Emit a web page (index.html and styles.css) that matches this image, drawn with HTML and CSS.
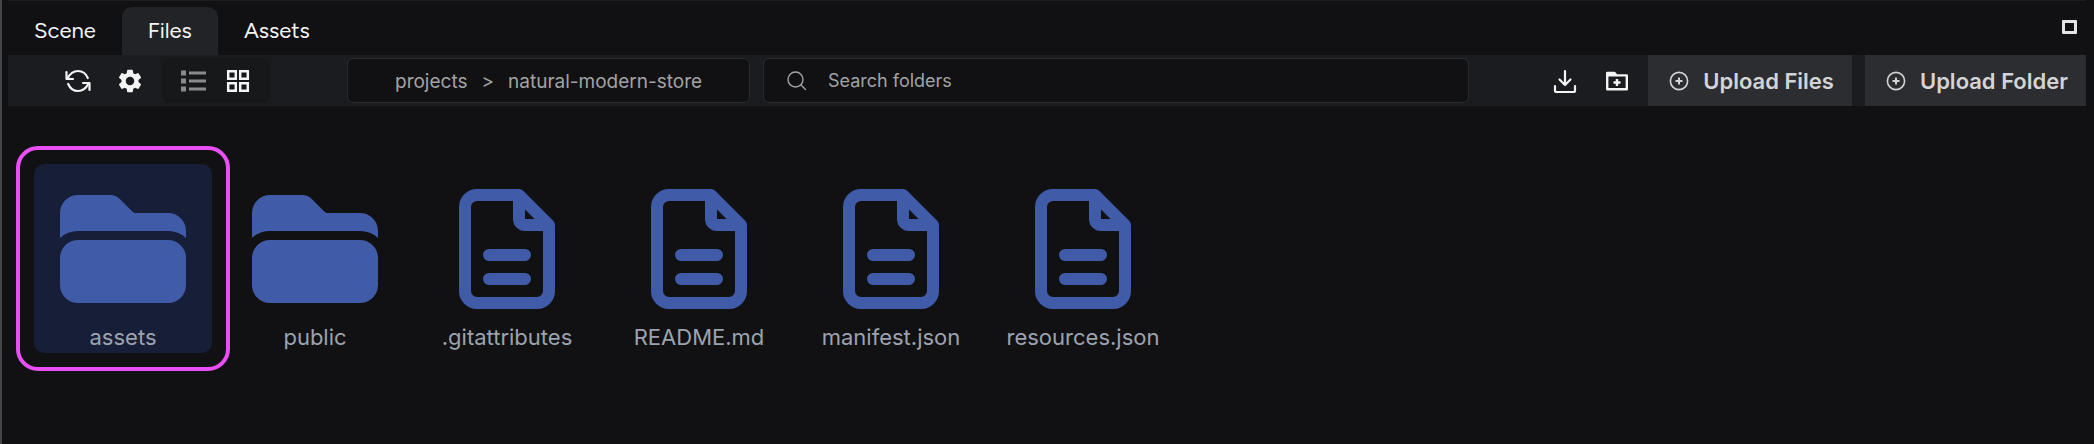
FILE: index.html
```html
<!DOCTYPE html>
<html lang="en">
<head>
<meta charset="utf-8">
<title>Files</title>
<link rel="stylesheet" href="styles.css">
</head>
<body>
<svg class="defs" aria-hidden="true">
  <symbol id="folder" viewBox="0 0 24 24"><path fill="currentColor" d="M19.5 21a3 3 0 0 0 3-3v-4.500a3 3 0 0 0-3-3h-15a3 3 0 0 0-3 3V18a3 3 0 0 0 3 3h15ZM1.500 10.146V6a3 3 0 0 1 3-3h5.379a2.250 2.250 0 0 1 1.590.659l2.122 2.121c.14.141.331.22.53.22H19.500a3 3 0 0 1 3 3v1.146A4.483 4.483 0 0 0 19.500 9h-15a4.483 4.483 0 0 0-3 1.146Z"/></symbol>
  <symbol id="file" viewBox="0 0 24 24"><path fill="none" stroke="currentColor" stroke-width="2" stroke-linecap="round" stroke-linejoin="round" d="M14 3H7a2 2 0 0 0-2 2v14a2 2 0 0 0 2 2h10a2 2 0 0 0 2-2V8L14 3v4a1 1 0 0 0 1 1h4M9 13h6M9 17h6"/></symbol>
  <symbol id="circle-plus" viewBox="0 0 20 20"><g fill="none" stroke="currentColor" stroke-width="1.600"><circle cx="10" cy="10" r="8.600"/><path stroke-width="2" d="M10 6.500v7M6.500 10h7"/></g></symbol>
</svg>
<main class="panel">
  <header class="tabs">
    <nav class="tab-list" role="tablist">
      <button class="tab" role="tab">Scene</button>
      <button class="tab tab-active" role="tab" aria-selected="true">Files</button>
      <button class="tab" role="tab">Assets</button>
    </nav>
    <button class="maximize" aria-label="Maximize"></button>
  </header>
  <div class="toolbar">
    <div class="tools">
      <button class="tool" aria-label="Refresh"><svg viewBox="0 0 26 26"><g fill="none" stroke="currentColor" stroke-width="2.200" stroke-linecap="round" stroke-linejoin="round"><path d="M1.500 4v7H8M24.500 22v-7H18"/><path d="M2.500 10.500C5 5.500 9 3 13 3c4.500 0 8 2.700 9.800 7M23.500 15.500C21 20.500 17 23 13 23c-4.500 0-8-2.700-9.800-7"/></g></svg></button>
      <button class="tool" aria-label="Settings"><svg viewBox="1 1 22 22"><path fill="currentColor" d="M19.140 12.940c.04-.3.060-.61.060-.94 0-.32-.02-.64-.07-.94l2.030-1.580a.49.490 0 0 0 .12-.61l-1.920-3.320a.488.488 0 0 0-.59-.22l-2.390.96c-.5-.38-1.030-.7-1.620-.94l-.36-2.540a.484.484 0 0 0-.48-.41h-3.840c-.24 0-.43.170-.47.410l-.36 2.540c-.59.240-1.130.570-1.620.940l-2.390-.96c-.22-.08-.47 0-.59.220L2.740 8.870c-.12.210-.08.470.12.610l2.030 1.580c-.05.300-.09.630-.09.940s.02.640.07.940l-2.030 1.580a.49.490 0 0 0-.12.610l1.920 3.320c.12.220.370.290.59.220l2.390-.96c.5.380 1.030.700 1.620.940l.36 2.540c.05.240.240.410.48.410h3.840c.24 0 .44-.17.470-.41l.36-2.540c.59-.24 1.130-.56 1.620-.94l2.390.96c.22.080.470 0 .59-.22l1.920-3.320c.12-.22.070-.47-.12-.61l-2.010-1.580zM12 15.600c-1.980 0-3.600-1.620-3.600-3.600s1.620-3.600 3.600-3.600 3.600 1.620 3.600 3.600-1.620 3.600-3.600 3.600z"/></svg></button>
    </div>
    <div class="views">
      <button class="tool tool-dim" aria-label="List view"><svg viewBox="0 0 26 26"><path fill="currentColor" d="M1 2.500h5v5H1zM9 3.500h17v3H9zM1 10.500h5v5H1zM9 11.500h17v3H9zM1 18.500h5v5H1zM9 19.500h17v3H9z"/></svg></button>
      <button class="tool" aria-label="Grid view"><svg viewBox="0 0 26 26"><path fill="none" stroke="currentColor" stroke-width="2.500" d="M3.200 3.200h7.600v7.600H3.200zM15.200 3.200h7.600v7.600h-7.600zM3.200 15.200h7.600v7.600H3.200zM15.200 15.200h7.600v7.600h-7.600z"/></svg></button>
    </div>
    <nav class="crumbs" aria-label="Path"><a href="#">projects</a><span>&gt;</span><a href="#">natural-modern-store</a></nav>
    <label class="search">
      <svg viewBox="0 0 20 20" aria-hidden="true"><g fill="none" stroke="currentColor" stroke-width="1.400" stroke-linecap="round"><circle cx="8.500" cy="8.500" r="7.500"/><path d="M14 14l4.500 4.500"/></g></svg>
      <input type="text" placeholder="Search folders" aria-label="Search folders">
    </label>
    <div class="actions">
      <button class="tool" aria-label="Download"><svg viewBox="0 0 26 26"><path fill="none" stroke="currentColor" stroke-width="2.200" stroke-linecap="round" stroke-linejoin="round" d="M13 3v14M7.500 11.500 13 17l5.500-5.500M3 18v4.500a1.500 1.500 0 0 0 1.500 1.500h17a1.500 1.500 0 0 0 1.500-1.500V18"/></svg></button>
      <button class="tool" aria-label="New folder"><svg viewBox="0 0 26 26"><g fill="none" stroke="currentColor" stroke-width="2.400" stroke-linejoin="round"><path d="M3.200 21.300V5h7.300l2 2.400h10.300v13.900zM3.200 7.400h9.300"/><path d="M13 11v7M9.500 14.500h7"/></g></svg></button>
    </div>
    <div class="uploads">
      <button class="upload"><svg aria-hidden="true"><use href="#circle-plus"/></svg>Upload Files</button>
      <button class="upload"><svg aria-hidden="true"><use href="#circle-plus"/></svg>Upload Folder</button>
    </div>
  </div>
  <section class="grid" aria-label="Files">
    <button class="item item-selected"><svg aria-hidden="true"><use href="#folder"/></svg><span>assets</span></button>
    <button class="item"><svg aria-hidden="true"><use href="#folder"/></svg><span>public</span></button>
    <button class="item"><svg aria-hidden="true"><use href="#file"/></svg><span>.gitattributes</span></button>
    <button class="item"><svg aria-hidden="true"><use href="#file"/></svg><span>README.md</span></button>
    <button class="item"><svg aria-hidden="true"><use href="#file"/></svg><span>manifest.json</span></button>
    <button class="item"><svg aria-hidden="true"><use href="#file"/></svg><span>resources.json</span></button>
  </section>
</main>
</body>
</html>
```
FILE: styles.css
```css
* { box-sizing: border-box; }
body {
  margin: 0;
  background: #111113;
  color: #f4f4f5;
  font: 22px/28px Inter, "Liberation Sans", sans-serif;
}
button {
  margin: 0;
  padding: 0;
  border: 0;
  background: none;
  color: inherit;
  font: inherit;
}
svg { display: block; flex: none; }
.defs { position: absolute; width: 0; height: 0; }
.panel {
  min-height: 100vh;
  padding: 0 8px 0 6px;
  border-left: 2px solid #444446;
}
.tabs {
  display: flex;
  align-items: flex-end;
  justify-content: space-between;
  height: 55px;
  border-top: 1px solid #1d1e21;
}
.tab-list { display: flex; }
.tab {
  height: 48px;
  padding: 0 26px;
  border-radius: 10px 10px 0 0;
  font-family: Figtree, Inter, sans-serif;
}
.tab-active { background: #222326; }
.maximize {
  width: 15px;
  height: 14px;
  margin: 0 9px 21px 0;
  border: 3px solid #e4e4e5;
  border-radius: 1px;
}
.toolbar {
  display: flex;
  align-items: center;
  height: 51px;
  background: #1b1c1f;
}
.tools { display: flex; gap: 26px; padding: 0 19px 0 57px; }
.tool svg { width: 26px; height: 26px; }
.tool-dim { color: #8b8b8d; }
.views {
  display: flex;
  gap: 19px;
  align-items: center;
  width: 108px;
  height: 45px;
  padding: 0 18px;
  border-radius: 8px;
  background: #17181a;
}
.crumbs, .search {
  display: flex;
  align-items: center;
  height: 45px;
  border: 1px solid #2b2c2f;
  border-radius: 6px;
  background: #111113;
  color: #a3a3a5;
}
.crumbs {
  gap: 14px;
  width: 403px;
  margin-left: 77px;
  padding: 2px 0 0 47px;
  font-size: 19px;
}
.crumbs a { color: inherit; text-decoration: none; }
.search {
  flex: 1;
  gap: 21px;
  margin-left: 13px;
  padding-left: 23px;
  font-size: 18px;
}
.search svg { width: 20px; height: 20px; }
.search input {
  flex: 1;
  min-width: 0;
  padding: 0;
  border: 0;
  outline: 0;
  background: none;
  color: inherit;
  font: inherit;
}
.search input::placeholder { color: inherit; opacity: 1; }
.actions { display: flex; gap: 26px; padding: 0 18px 0 83px; }
.uploads { display: flex; gap: 13px; align-self: stretch; }
.upload {
  display: flex;
  align-items: center;
  gap: 14px;
  padding: 0 18px 0 21px;
  background: #2c2d30;
  color: #d4d4d6;
  font-weight: 600;
}
.upload svg { width: 20px; height: 20px; }
.grid { display: flex; flex-wrap: wrap; gap: 14px; padding: 58px 26px; }
.item {
  position: relative;
  display: flex;
  flex-direction: column;
  align-items: center;
  width: 178px;
  padding: 13px 0 2px;
  border-radius: 10px;
  color: #9ca3af;
}
.item svg { width: 144px; height: 144px; color: #405ba8; }
.item span { margin-top: 2px; }
.item-selected { background: #171e37; }
.item-selected::after {
  content: "";
  position: absolute;
  inset: -18px;
  border: 4px solid #e94ff5;
  border-radius: 22px;
}
```
